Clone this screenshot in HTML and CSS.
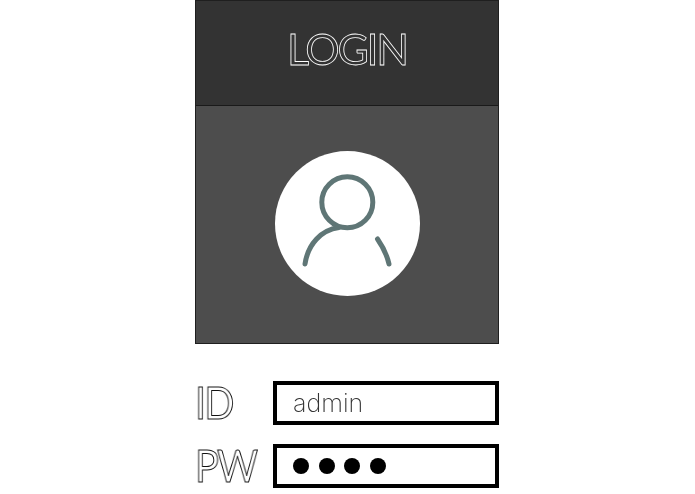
FILE: index.html
```html
<html>

<head>
    <link rel="stylesheet" href="styles.css">
    <title>Login</title>
</head>

<body>
    <div class="panel">
        <div class="panel-head">
            <h1 class="title">LOGIN</h1>
        </div>
        <div class="panel-body">
            <div class="avatar">
                <svg class="avatar-icon" width="145" height="145" viewBox="0 0 145 145">
                    <circle cx="72.3" cy="51.3" r="25.5" />
                    <path d="M30 113 C33 93 46 79 64 76.5" />
                    <path d="M102.5 88 C108 96 112 104 114 113" />
                </svg>
            </div>
        </div>
    </div>
    <form class="login-form">
        <div class="row">
            <label class="label">ID</label>
            <div class="field"><span class="field-text">admin</span></div>
        </div>
        <div class="row">
            <label class="label">PW</label>
            <div class="field">
                <span class="dot"></span>
                <span class="dot"></span>
                <span class="dot"></span>
                <span class="dot"></span>
            </div>
        </div>
    </form>
</body>

</html>
```

FILE: styles.css
```css
body {
    margin: 0;
    background-color: white;
    font-family: "Lato", "Liberation Sans", sans-serif;
}

.panel {
    width: 304px;
    margin-left: 195px;
    box-sizing: border-box;
    border: solid 1px #1f1f1f;
    background-color: #4d4d4d;
}

.panel-head {
    height: 105px;
    padding-bottom: 9px;
    box-sizing: border-box;
    border-bottom: solid 1px #1a1a1a;
    background-color: #333333;
    display: flex;
    justify-content: center;
    align-items: center;
}

.title {
    margin: 0;
    font-size: 43px;
    font-weight: 400;
    letter-spacing: -2.3px;
    color: #333333;
    -webkit-text-stroke: 0.8px white;
    will-change: transform;
}

.panel-body {
    height: 237px;
    padding-top: 45px;
    box-sizing: border-box;
    display: flex;
    justify-content: center;
}

.avatar {
    width: 145px;
    height: 145px;
    border-radius: 50%;
    background-color: white;
}

.avatar-icon {
    display: block;
    fill: none;
    stroke: #5f7676;
    stroke-width: 5;
    stroke-linecap: round;
}

.login-form {
    width: 304px;
    margin: 37px 0 0 195px;
    display: flex;
    flex-direction: column;
    gap: 19px;
}

.row {
    height: 44px;
    display: flex;
    justify-content: space-between;
    align-items: center;
}

.label {
    padding-bottom: 3px;
    font-size: 44px;
    font-weight: 400;
    letter-spacing: -2px;
    color: white;
    -webkit-text-stroke: 1px #111111;
    transform: scaleX(0.9);
    transform-origin: left;
    will-change: transform;
}

.field {
    width: 226px;
    height: 44px;
    box-sizing: border-box;
    border: solid 4px black;
    padding-left: 16px;
    display: flex;
    align-items: center;
    gap: 9.5px;
}

.field-text {
    font-family: "Inter", "Liberation Sans", sans-serif;
    font-size: 25px;
    font-weight: 200;
    color: #333333;
    will-change: transform;
}

.dot {
    width: 16px;
    height: 16px;
    border-radius: 50%;
    background-color: black;
}
```
